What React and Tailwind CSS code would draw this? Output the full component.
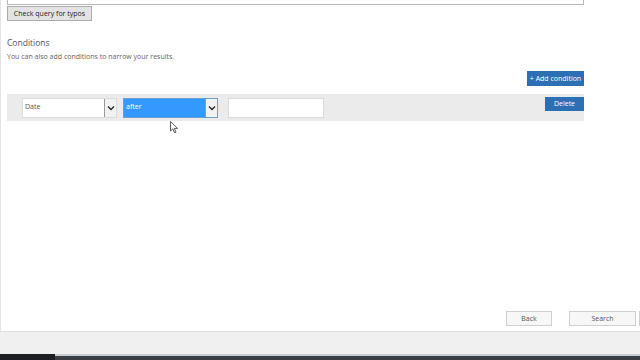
import React from 'react'

const font = { fontFamily: '"Open Sans", "Noto Sans", sans-serif' }

function Select({ value, active }) {
  return (
    <div className={`flex h-[20px] w-[95px] border ${active ? 'border-[#6a9fd8]' : 'border-[#dcdcdc]'} bg-white`}>
      <div className={`flex-1 flex items-center pl-[2px] text-[7px] ${active ? 'bg-[#3399ff] text-white' : 'text-[#555]'}`}>{value}</div>
      <div className="w-[12px] flex items-center justify-center border-l border-[#9a9a9a] bg-[#f2f2f2]">
        <svg width="8" height="6" viewBox="0 0 8 6"><path d="M1 1.5 L4 4.5 L7 1.5" stroke="#222" strokeWidth="1.3" fill="none" /></svg>
      </div>
    </div>
  )
}

export default function App() {
  return (
    <div className="relative w-[640px] h-[360px] bg-white overflow-hidden flex flex-col" style={font}>
      <div className="flex-1 border-l border-[#e4e4e4] flex flex-col">
        {/* query box bottom edge */}
        <div className="ml-[6px] w-[577px] h-[5px] border border-t-0 border-[#b9b9b9]" />
        <div className="ml-[6px] mt-[1px] flex">
          <button className="h-[15px] w-[85px] text-[7px] text-[#222] bg-[#e3e3e3] border border-[#acacac] leading-none">Check query for typos</button>
        </div>

        <div className="ml-[6px] mt-[18px] text-[8.5px] text-[#555] leading-none">Conditions</div>
        <div className="ml-[6px] mt-[5px] text-[7px] text-[#666] leading-none">You can also add conditions to narrow your results.</div>

        <div className="w-[583px] flex justify-end mt-[11px]">
          <button className="h-[15px] w-[57px] bg-[#2d6fb5] text-white text-[7px] leading-none">+ Add condition</button>
        </div>

        <div className="ml-[6px] w-[577px] h-[27px] mt-[8px] bg-[#ebebeb] flex items-start">
          <div className="flex items-center gap-[6px] ml-[15px] mt-[4px]">
            <Select value="Date" />
            <Select value="after" active />
            <div className="ml-[4px] w-[96px] h-[20px] bg-white border border-[#dcdcdc]" />
          </div>
          <div className="flex-1" />
          <button className="mt-[3px] h-[14px] w-[39px] bg-[#2d6fb5] text-white text-[7px] leading-none">Delete</button>
        </div>

        <div className="flex-1" />
        <div className="flex justify-end gap-[17px] mb-[5px] -mr-[9px]">
          <button className="h-[15px] w-[46px] bg-[#f7f7f7] border border-[#d0d0d0] text-[7px] text-[#555] leading-none">Back</button>
          <div className="flex gap-[3px]">
            <button className="h-[15px] w-[67px] bg-[#f7f7f7] border border-[#d0d0d0] text-[7px] text-[#555] leading-none">Search</button>
            <button className="h-[15px] w-[10px] bg-[#f7f7f7] border border-[#d0d0d0]" />
          </div>
        </div>
      </div>
      <div className="h-[23px] bg-[#f0f0f0] border-t border-[#e0e0e0]" />
      <div className="h-[6px] flex">
        <div className="w-[55px] bg-[#1d1f22]" />
        <div className="flex-1 bg-[#3a3d42] border-t-2 border-[#c9ced4]" />
      </div>

      {/* mouse cursor */}
      <svg className="absolute left-[170px] top-[121px]" width="9" height="13" viewBox="0 0 9 13">
        <path d="M0.5 0.5 L0.5 10 L2.8 7.8 L4.5 11.8 L6 11.2 L4.4 7.4 L7.6 7.4 Z" fill="#fff" stroke="#333" strokeWidth="0.8" />
      </svg>
    </div>
  )
}
